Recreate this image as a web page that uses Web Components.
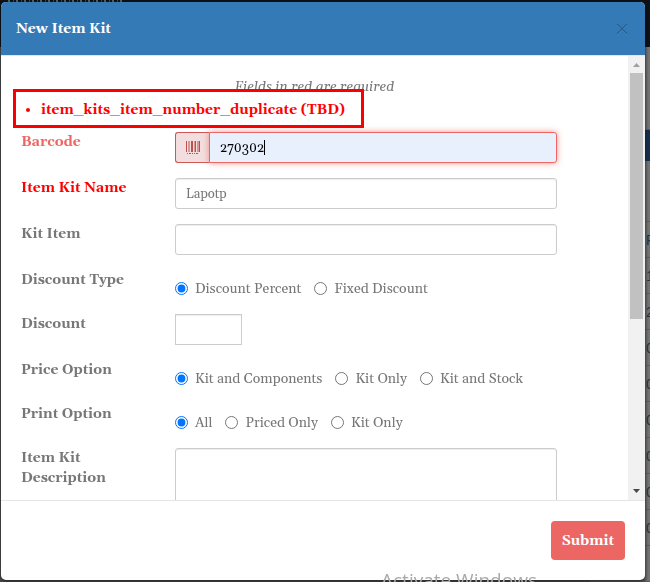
<!DOCTYPE html>
<html lang="en">
<head>
<meta charset="utf-8">
<title>New Item Kit</title>
<style>
html, body { margin: 0; height: 100%; overflow: hidden; }
body { font: 14px/20px Gelasio, Georgia, "Liberation Serif", serif; color: #777; background: #545557; }
</style>
</head>
<body>
<page-backdrop></page-backdrop>
<kit-modal heading="New Item Kit">
  <kit-form></kit-form>
  <submit-button slot="footer">Submit</submit-button>
</kit-modal>
<os-watermark>Activate Windows</os-watermark>
<script>
function define(name, html, setup) {
  const template = document.createElement('template');
  template.innerHTML = html;
  customElements.define(name, class extends HTMLElement {
    constructor() {
      super();
      this.attachShadow({ mode: 'open' }).append(template.content.cloneNode(true));
    }
    connectedCallback() { if (setup) setup(this, this.shadowRoot); }
  });
}

define('page-backdrop', `
<style>
:host { position: fixed; inset: 0; z-index: -1; display: flex; flex-direction: column; background: #4b4c4f; }
.nav { height: 47px; background: #0c1218; }
.nav i { display: block; width: 117px; height: 2px; margin-left: 8px; background: repeating-linear-gradient(90deg, #59604f 0 2px, #0c1218 2px 5px, #3c4650 5px 6px, #0c1218 6px 8px); }
.grid { flex: 1; display: flex; flex-direction: column; align-items: flex-end; overflow: hidden; }
.grid div { box-sizing: border-box; width: 60px; background: linear-gradient(90deg, #555 54px, #757575 58px); border-bottom: 1px solid #5c5c5c; }
.grid .gap { height: 83px; }
.grid .action { height: 32px; background: #18304d; border: 0; }
.grid .tools { height: 61px; }
.grid .row { height: 36px; flex: none; padding-left: 56px; color: #27343f; font: 14px/36px "Liberation Sans", sans-serif; overflow: hidden; }
</style>
<div class="nav"><i></i></div>
<div class="grid"><div class="gap"></div><div class="action"></div><div class="tools"></div>
<div class="row">R</div><div class="row">1</div><div class="row">2</div><div class="row">0</div><div class="row">0</div><div class="row">0</div><div class="row">0</div><div class="row">0</div><div class="row">0</div><div class="row"></div></div>`);

define('scroll-rail', `
<style>
:host { flex: none; width: 17px; box-sizing: border-box; padding: 0 2px; display: flex; flex-direction: column; align-items: stretch; background: #f1f1f1; }
svg { flex: none; width: 13px; height: 17px; }
.track { flex: 1; }
.thumb { height: 60%; background: #c1c1c1; }
</style>
<svg viewBox="0 0 13 17"><path d="M3 11L6.500 7L10 11Z" fill="#a0a0a0"/></svg>
<div class="track"><div class="thumb"></div></div>
<svg viewBox="0 0 13 17"><path d="M3 6H10L6.500 10Z" fill="#484848"/></svg>`);

define('kit-modal', `
<style>
:host { display: flex; flex-direction: column; box-sizing: border-box; height: calc(100vh - 4px); margin: 2px 5px 2px 1px; background: #fff; border-radius: 5px; overflow: hidden; box-shadow: 0 2px 4px rgba(0,0,0,.5); }
header { display: flex; justify-content: space-between; align-items: center; height: 53px; padding: 0 15px; background: #337ab7; border-bottom: 1px solid #e5e5e5; color: #fff; }
h1 { margin: 0; font-size: 14px; line-height: 20px; font-weight: bold; }
button { border: 0; padding: 0; width: 16px; height: 20px; background: none; display: grid; place-items: center; }
main { flex: 1; min-height: 0; display: flex; }
.content { flex: 1; min-width: 0; overflow: hidden; padding: 21px 15px 0; }
footer { display: flex; justify-content: flex-end; padding: 20px; border-top: 1px solid #e5e5e5; }
</style>
<header><h1></h1><button type="button" aria-label="Close"><svg width="12" height="12" viewBox="0 0 12 12"><path d="M1 2L11 12M11 2L1 12" stroke="#5b97c9" stroke-width="1"/><path d="M1 1L11 11M11 1L1 11" stroke="#265e8f" stroke-width="1.200"/></svg></button></header>
<main><div class="content"><slot></slot></div><scroll-rail></scroll-rail></main>
<footer><slot name="footer"></slot></footer>`, (el, root) => { root.querySelector('h1').textContent = el.getAttribute('heading'); });

define('submit-button', `
<style>
:host { display: block; }
button { height: 39px; padding: 1px 11px 0; border: 0; border-radius: 4px; background: #ec6764; color: #fff; font: inherit; font-weight: bold; }
</style><button type="submit"><slot></slot></button>`);

define('error-box', `
<style>
:host { display: block; width: fit-content; box-sizing: border-box; margin: -8px 0 4px -3px; border: 3px solid #fb0000; position: relative; background: #fff; padding: 8px 16px 5px 25px; color: #f00; font-weight: bold; }
ul { margin: 0; padding: 0; }
</style><ul><li><slot></slot></li></ul>`);

define('form-row', `
<style>
:host { display: grid; grid-template-columns: 154px minmax(0, 1fr) 56px; padding-left: 5px; margin-bottom: 15px; align-items: start; }
.label { padding: 0 30px 0 0; font-weight: bold; }
.field { min-width: 0; }
</style>
<div class="label"><slot name="label"></slot></div><div class="field"><slot></slot></div>`);

define('kit-form', `
<style>
:host { display: block; }
.note { margin: 0; text-align: center; font-style: italic; }
label.required { color: #f00; }
label.invalid { color: #ec6764; }
input[type=text], textarea { display: block; box-sizing: border-box; width: 100%; height: 31px; margin: 0; padding: 0 10px; border: 1px solid #ccc; border-radius: 3px; background: #fff; color: #777; font: inherit; font-size: 13px; box-shadow: inset 0 1px 1px rgba(0,0,0,.075); outline: none; resize: none; }
textarea { height: 100px; }
input.short[type=text] { width: 67px; border-radius: 0; }
.group { display: flex; }
.addon { box-sizing: border-box; width: 34px; display: grid; place-items: center; border: 1px solid #d05553; border-right: 0; border-radius: 3px 0 0 3px; background: #f2dede; }
.group input[type=text] { flex: 1; min-width: 0; border-color: #ec6764; border-radius: 0 3px 3px 0; background: linear-gradient(#000, #000) 54px center / 1px 15px no-repeat #e8f0fe; color: #000; box-shadow: 0 0 6px rgba(236,103,100,.7); }
.radios { display: flex; padding-top: 8px; gap: 13px; height: 21px; }
.radios label { display: flex; align-items: flex-start; gap: 7px; line-height: 22px; white-space: nowrap; }
.radios input { width: 13px; height: 13px; margin: 4px 0 0; accent-color: #0075ff; }
</style>
<form>
<p class="note">Fields in red are required</p>
<error-box>item_kits_item_number_duplicate (TBD)</error-box>
<form-row><label slot="label" class="invalid" for="barcode">Barcode</label>
<div class="group"><span class="addon"><svg width="14" height="14" viewBox="0 0 14 14" fill="#c0504e"><path d="M0 0h1v11H0zM2 0h.5v11H2zM3.500 0h.5v11h-.5zM5 0h2v11H5zM8 0h.500v11H8zM9 0h1v11H9zM11 0h.500v11H11zM12.500 0H14v11h-1.500zM1 12h1v1H1zM3 12h2v1H3zM6 12h1v1H6zM8 12h1v1H8zM10 12h2v1h-2z"/></svg></span><input id="barcode" type="text" value="270302"></div></form-row>
<form-row><label slot="label" class="required" for="name">Item Kit Name</label><input id="name" type="text" value="Lapotp"></form-row>
<form-row><label slot="label" for="item">Kit Item</label><input id="item" type="text"></form-row>
<form-row><span slot="label">Discount Type</span><div class="radios" role="radiogroup" aria-label="Discount Type"><label><input type="radio" name="dt" checked>Discount Percent</label><label><input type="radio" name="dt">Fixed Discount</label></div></form-row>
<form-row><label slot="label" for="discount">Discount</label><input id="discount" class="short" type="text"></form-row>
<form-row><span slot="label">Price Option</span><div class="radios" role="radiogroup" aria-label="Price Option"><label><input type="radio" name="po" checked>Kit and Components</label><label><input type="radio" name="po">Kit Only</label><label><input type="radio" name="po">Kit and Stock</label></div></form-row>
<form-row><span slot="label">Print Option</span><div class="radios" role="radiogroup" aria-label="Print Option"><label><input type="radio" name="pr" checked>All</label><label><input type="radio" name="pr">Priced Only</label><label><input type="radio" name="pr">Kit Only</label></div></form-row>
<form-row><label slot="label" for="desc">Item Kit Description</label><textarea id="desc"></textarea></form-row>
</form>`);

define('os-watermark', `
<style>
:host { position: fixed; left: 381px; bottom: -12px; font: 19px/27px "Open Sans", "Noto Sans", sans-serif; color: #a9a9a9; white-space: nowrap; }
</style><slot></slot>`);
</script>
</body>
</html>
